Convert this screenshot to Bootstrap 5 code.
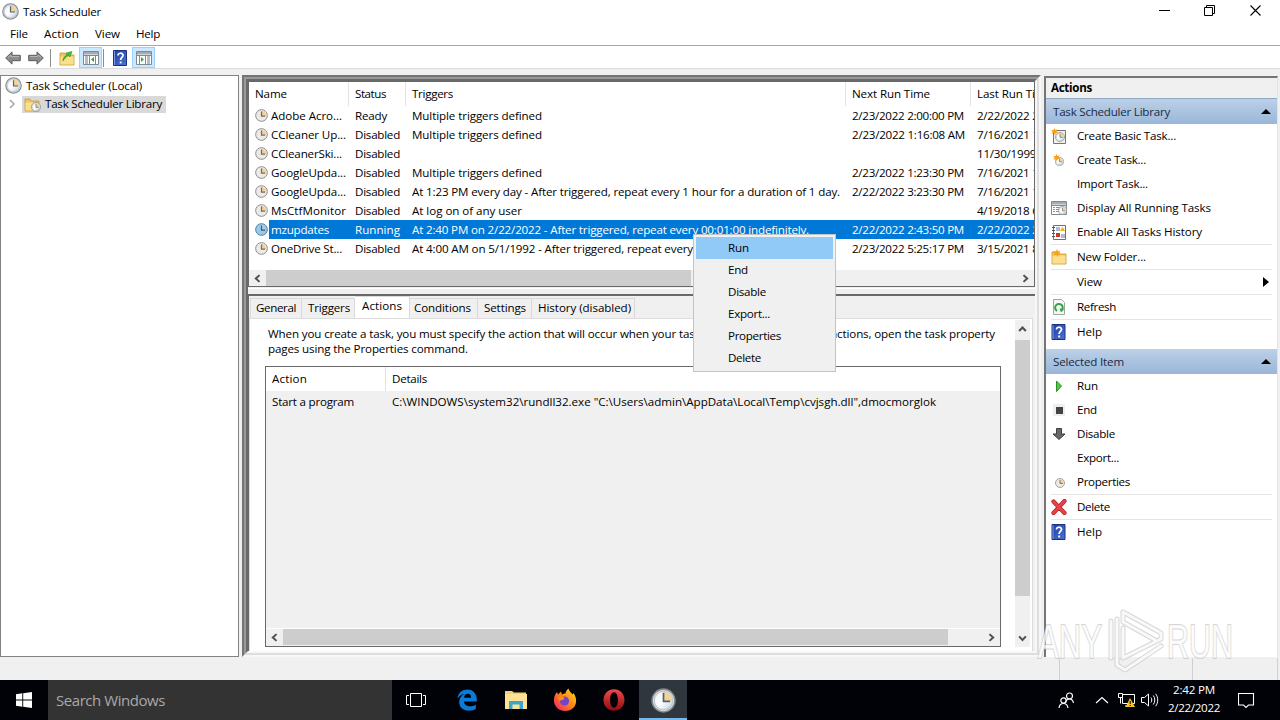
<!DOCTYPE html>
<html lang="en">
<head>
    <meta charset="UTF-8">
    <meta name="viewport" content="width=device-width, initial-scale=1.0">
    <title>Task Scheduler</title>
    <!-- Bootstrap CSS -->
    <link href="https://cdn.jsdelivr.net/npm/bootstrap@5.3.3/dist/css/bootstrap.min.css" rel="stylesheet">
    <style>
        body {
          width: 1280px;
          height: 720px;
          background: #f0f0f0;
          color: #000;
          font-family: "Open Sans", "Noto Sans", sans-serif;
          font-size: 11.6px;
          line-height: 15px;
        }
        svg { display: block; flex: none; }
        span { white-space: pre; }

        /* window chrome */
        .titlebar { height: 24px; padding: 0 2px 1px 2px; gap: 4px; }
        .titlebar .caption { width: 45.5px; height: 20px; }
        .titlebar .caption svg { margin-top: -2px; }
        .menubar { height: 21px; padding-left: 10px; gap: 16px; padding-bottom: 2px; }
        .toolbar { height: 24px; border-top: 1px solid #a8a8a8; border-bottom: 1px solid #dcdcdc; padding: 1px 0 0 5px; }
        .toolbar .divider { width: 1px; height: 18px; background: #8d8d8d; }
        .toolbar .divider.first { margin: 0 8px 0 6px; }
        .toolbar .divider.second { margin: 0 9px 0 1px; }
        .toolbar .pressed { width: 23px; height: 21px; background: #cce8ff; border: 1px solid #99d1ff; }
        .toolbar .pressed.last { margin-left: 5px; }
        .toolbar .forward { margin-left: 7px; }
        .workspace { height: 582px; margin-top: 6px; }

        /* left tree */
        .tree { width: 239px; border: 1px solid #828282; }
        .tree-root { height: 19px; padding-left: 4px; gap: 4px; }
        .tree-root span, .tree-node span { padding-bottom: 1px; }
        .tree-node { height: 18px; padding-left: 8px; }
        .tree-node .picked { background: #d9d9d9; height: 17px; width: 144px; padding-left: 2px; gap: 4px; }

        /* centre */
        .bevel { border: 2px solid; border-color: #747474 #f7f7f7 #f7f7f7 #747474; }
        .bevel-2 { border: 2px solid; border-color: #999 #dedede #dedede #999; }
        .bevel-3 { border: 2px solid; border-color: #696969 #f7f7f7 #f7f7f7 #696969; }
        .centre { width: 799px; margin-left: 3px; }
        .task-list { height: 206px; border: 1px solid #696969; }
        .task-row { display: grid; grid-template-columns: 100px 57px 440px 125px 1fr; height: 19px; }
        .task-row > div { padding-left: 6px; display: flex; align-items: center; overflow: hidden; min-width: 0; }
        .task-row > div:first-child { gap: 3px; }
        .task-head { height: 24px; }
        .task-head > div { border-right: 1px solid #e2e2e2; padding-bottom: 1px; }
        .task-head > div:last-child { border-right: 0; }
        .task-row.chosen { background: linear-gradient(to right, transparent 20px, #0078d7 20px); color: #fff; }
        .splitter { height: 7px; background: linear-gradient(#f0f0f0 0 1px, #fff 1px 2px, #f0f0f0 2px); }
        .detail { border-top: 2px solid #696969; border-left: 1px solid #696969; }
        .scroller { height: 16px; background: #f0f0f0; }
        .scroller .thumb { background: #cdcdcd; height: 16px; }
        .scroller .end { width: 17px; height: 16px; }
        .vscroller { width: 15px; background: #f0f0f0; height: 327px; margin: 1px 2px 0 0; }
        .vscroller .thumb { background: #cdcdcd; height: 256px; }
        .vscroller .end { width: 15px; height: 20px; }

        /* tabs */
        .tab-strip { height: 22px; padding-left: 1px; }
        .tab-item { height: 20px; border: 1px solid #d9d9d9; border-left-width: 0; border-bottom: 0; padding: 0 0 2px 6px; display: flex; align-items: center; }
        .tab-item:first-child { border-left-width: 1px; padding-left: 5px; }
        .tab-item.current { height: 22px; background: #fff; padding: 0 0 4px 7px; }
        .tab-item.after { padding-left: 4px; }
        .tab-page { border: 1px solid #dcdcdc; border-bottom: 0; margin-right: 2px; height: 333px; }
        .page-body { padding-left: 15px; }
        .note { padding: 7px 0 0 3px; height: 47px; }
        .action-box { width: 736px; height: 281px; border: 1px solid #696969; background: #f0f0f0; }
        .action-box .scroller { border-top: 1px solid #fff; height: 18px; padding-bottom: 1px; }
        .action-line { display: grid; grid-template-columns: 120px 1fr; height: 20px; align-items: center; }
        .action-line > div { padding-left: 6px; }
        .action-line.heading { background: #fff; height: 24px; align-items: stretch; }
        .action-line.heading > div { padding-top: 4px; }
        .action-line.heading > div:first-child { border-right: 1px solid #e2e2e2; }

        /* right pane */
        .side { width: 234px; margin-left: 3px; margin-top: 1px; border-left: 2px solid #757575; border-top: 2px solid #757575; border-right: 1px solid #e3e3e3; }
        .side-title { height: 21px; background: #f0f0f0; padding: 0 0 1px 5px; border-bottom: 1px solid #8fa9c2; }
        .side-group { height: 25px; background: linear-gradient(#bcd0e8, #9ab6d8); padding: 0 6px 0 7px; color: #1b2a44; }
        .side-group.second { margin-top: 5px; }
        .side-row { height: 24px; padding-left: 5px; }
        .side-row span { padding-bottom: 2px; }
        .side-row .glyph { width: 26px; height: 16px; }
        .side-line { height: 1px; background: #e4e4e4; margin: 0 5px; }

        .status { height: 23px; padding-top: 1px; }
        .status div { border-right: 1px solid #d0d0d0; }

        /* taskbar */
        .taskbar { height: 40px; background: #000208; color: #fff; }
        .taskbar .start { width: 48px; }
        .taskbar .search { width: 344px; background: #333; color: #a9a9a9; font-size: 15px; padding-left: 8px; }
        .taskbar .app { width: 49px; }
        .taskbar .taskview { width: 48px; margin-right: 2px; }
        .taskbar .app.running { width: 48px; margin-left: 1px; background: #30363d; border-bottom: 2px solid #76b9ed; padding-top: 2px; }
        .tray { width: 222px; }
        .tray .up { margin-left: 20px; }
        .tray .net { margin-left: 9px; }
        .tray .sound { margin-left: 6px; }
        .tray .notes { margin-left: 17px; }
        .clock-text { line-height: 18px; width: 54px; padding-bottom: 2px; margin-left: 8px; }

        /* floating items */
        .popup { left: 693px; top: 234px; width: 143px; height: 138px; background: #f0f0f0; border: 1px solid #c4c4c4; padding: 2px; }
        .popup div { height: 22px; padding: 0 0 1px 32px; display: flex; align-items: center; }
        .popup .hot { background: #91c9f7; }
        .watermark { left: 1034px; top: 606px; }
    </style>
</head>
<body class="overflow-hidden d-flex flex-column">

<!-- Icon shapes -->
<svg width="0" height="0" class="position-absolute">
    <defs>
        <linearGradient id="face" x1="0" y1="0" x2="1" y2="1"><stop offset="0" stop-color="#e9f1f7"/><stop offset=".5" stop-color="#fff"/><stop offset="1" stop-color="#b9cfdf"/></linearGradient>
        <linearGradient id="fox" x1="1" y1="0" x2="0" y2="1"><stop offset="0" stop-color="#ffe226"/><stop offset=".45" stop-color="#ff8a16"/><stop offset="1" stop-color="#f5156c"/></linearGradient>
        <linearGradient id="operaRed" x1="0" y1="0" x2="0" y2="1"><stop offset="0" stop-color="#f04a4a"/><stop offset="1" stop-color="#8e0b10"/></linearGradient>
        <linearGradient id="book" x1="0" y1="0" x2="1" y2="1"><stop offset="0" stop-color="#1e3d9c"/><stop offset="1" stop-color="#4d74d8"/></linearGradient>
        <symbol id="clock" viewBox="0 0 16 16">
            <circle cx="8" cy="8" r="7.3" fill="#d9dcde" stroke="#85898c" stroke-width="1"/>
            <circle cx="8" cy="8" r="5.900" fill="url(#face)" stroke="#b4bcc3" stroke-width=".6"/>
            <path d="M8 8.500V2.400A5.900 5.900 0 0 1 13.700 8.500Z" fill="#f0d39c"/>
            <path d="M8 3V8.500H12.200" fill="none" stroke="#55606b" stroke-width="1.100"/>
        </symbol>
        <symbol id="clock-list" viewBox="0 0 16 16">
            <circle cx="8" cy="8" r="7.2" fill="#eceae6" stroke="#8b8b89" stroke-width="1.200"/>
            <path d="M8 8.500V2.600A5.600 5.600 0 0 1 13.500 8.500Z" fill="#f3cf9a"/>
            <path d="M8 3V8.700H12.500" fill="none" stroke="#7c6a58" stroke-width="1.500"/>
        </symbol>
        <symbol id="clock-picked" viewBox="0 0 16 16">
            <circle cx="8" cy="8" r="7.2" fill="#9cc8ea" stroke="#4c7ea6" stroke-width="1.200"/>
            <path d="M8 8.500V2.600A5.600 5.600 0 0 1 13.500 8.500Z" fill="#b5cbd0"/>
            <path d="M8 3V8.700H12.500" fill="none" stroke="#315e84" stroke-width="1.500"/>
        </symbol>
        <symbol id="help" viewBox="0 0 14 16">
            <path d="M.5.5h13v15H.5z" fill="url(#book)" stroke="#1a3180"/>
            <path d="M1.500 1v14" stroke="#7f9be6"/>
            <path d="M5 5.500C5 2.500 10 2.500 10 5.300C10 7.500 7.600 7.400 7.600 10" fill="none" stroke="#fff" stroke-width="1.700"/>
            <path d="M6.700 11.500h1.900v1.900H6.700z" fill="#fff"/>
        </symbol>
        <symbol id="folder" viewBox="0 0 16 16">
            <path d="M1 3h5l1.500 2H15v10H1z" fill="#f2c55b" stroke="#c9982f" stroke-width=".8"/>
            <path d="M1.500 6.500h13v8h-13z" fill="#fbdf8c"/>
        </symbol>
        <symbol id="arrow" viewBox="0 0 16 14">
            <path d="M.7 7 7 .9V4.300h8.300v5.400H7v3.400z" fill="#8c8c8c" stroke="#5c5c5c" stroke-width="1"/>
            <path d="M3 6.500 6 4v1.500h8" fill="none" stroke="#b4b4b4"/>
        </symbol>
        <symbol id="panel" viewBox="0 0 16 14">
            <path d="M.5.5h15v13H.5z" fill="#fff" stroke="#808890"/>
            <path d="M1 1h14v2.500H1z" fill="#a3abb3"/><path d="M1 4.500h14" stroke="#808890"/>
        </symbol>
        <symbol id="star" viewBox="0 0 8 8">
            <path d="M4 0 5 2.400 7.500 1.500 6.400 4 8 5.500 5.500 5.600 4.500 8 3.200 5.700.6 6.500 1.700 4 0 2.300 2.800 2.500z" fill="#f4a21c"/>
        </symbol>
        <symbol id="chev-left" viewBox="0 0 8 8"><path d="M5.800 1 2.500 4 5.800 7" fill="none" stroke="#505050" stroke-width="1.800"/></symbol>
        <symbol id="chev-right" viewBox="0 0 8 8"><path d="M2.200 1 5.500 4 2.200 7" fill="none" stroke="#505050" stroke-width="1.800"/></symbol>
    </defs>
</svg>

<!-- Title, menu and tool bars -->
<div class="bg-white">
    <div class="titlebar d-flex align-items-center">
        <svg width="17" height="17"><use href="#clock"/></svg>
        <span data-w="78">Task Scheduler</span>
        <div class="d-flex ms-auto">
            <div class="caption d-flex align-items-center justify-content-center"><svg width="11" height="11"><path d="M0 5.500h11" stroke="#000"/></svg></div>
            <div class="caption d-flex align-items-center justify-content-center"><svg width="11" height="11"><path d="M.5 2.500h8v8h-8zM2.500 2.500v-2h8v8h-2" fill="none" stroke="#000"/></svg></div>
            <div class="caption d-flex align-items-center justify-content-center"><svg width="11" height="11"><path d="M.5.5l10 10M10.500.5l-10 10" stroke="#000" stroke-width="1.100"/></svg></div>
        </div>
    </div>
    <div class="menubar d-flex align-items-center">
        <span data-w="18">File</span>
        <span data-w="35">Action</span>
        <span data-w="25">View</span>
        <span data-w="24">Help</span>
    </div>
    <div class="toolbar d-flex align-items-center">
        <svg width="16" height="14"><use href="#arrow"/></svg>
        <svg width="16" height="14" class="forward"><g transform="translate(16 0) scale(-1 1)"><use href="#arrow"/></g></svg>
        <div class="divider first"></div>
        <svg width="16" height="16" class="me-1"><use href="#folder"/><path d="M4 11C4 7 6 6 8 5L7 3l6-1.500-2 5.500-1.500-1.500C7 7 6 8 4 11z" fill="#45bd2e" stroke="#23861a" stroke-width=".5"/></svg>
        <div class="pressed d-flex align-items-center justify-content-center">
            <svg width="16" height="14"><use href="#panel"/><path d="M2 6h3M2 8h3M2 10h3M2 12h3" stroke="#707880"/><path d="M6.500 5v9M12.500 5v9" stroke="#808890"/><path d="M11 6v5L8 8.500z" fill="#35a52a"/></svg>
        </div>
        <div class="divider second"></div>
        <svg width="14" height="16"><use href="#help"/></svg>
        <div class="pressed last d-flex align-items-center justify-content-center">
            <svg width="16" height="14"><use href="#panel"/><path d="M11 6h3M11 8h3M11 10h3M11 12h3" stroke="#707880"/><path d="M3.500 5v9M9.500 5v9" stroke="#808890"/><path d="M5 6v5l3-2.500z" fill="#35a52a"/></svg>
        </div>
    </div>
</div>

<div class="workspace d-flex">
    <!-- Console tree -->
    <div class="tree bg-white">
        <div class="tree-root d-flex align-items-center">
            <svg width="17" height="17"><use href="#clock"/></svg>
            <span data-w="116">Task Scheduler (Local)</span>
        </div>
        <div class="tree-node d-flex align-items-center">
            <svg width="13" height="10"><path d="M1 1l4 4-4 4" fill="none" stroke="#a0a0a0" stroke-width="1.400"/></svg>
            <div class="picked d-flex align-items-center">
                <svg width="17" height="16"><use href="#folder" width="16" height="16"/><svg x="7" y="6" width="10" height="10"><use href="#clock"/></svg></svg>
                <span data-w="117">Task Scheduler Library</span>
            </div>
        </div>
    </div>

    <!-- Centre pane -->
    <div class="centre bevel"><div class="bevel-2 h-100"><div class="bevel-3 h-100">
        <div class="task-list bg-white d-flex flex-column overflow-hidden">
            <div class="task-row task-head">
                <div><span data-w="32">Name</span></div><div><span data-w="31">Status</span></div><div><span data-w="41">Triggers</span></div><div><span data-w="78">Next Run Time</span></div><div><span data-w="75">Last Run Time</span></div>
            </div>
            <div id="tasks"></div>
            <div class="scroller d-flex mt-auto">
                <div class="end d-flex align-items-center justify-content-center"><svg width="9" height="9"><use href="#chev-left"/></svg></div>
                <div class="thumb" style="width:425px"></div>
                <div class="end d-flex align-items-center justify-content-center ms-auto"><svg width="9" height="9"><use href="#chev-right"/></svg></div>
            </div>
        </div>
        <div class="splitter"></div>
        <div class="detail">
            <div class="tab-strip d-flex align-items-end">
                <div class="tab-item" style="width:52px"><span data-w="40">General</span></div>
                <div class="tab-item" style="width:53px"><span data-w="42">Triggers</span></div>
                <div class="tab-item current" style="width:55px"><span data-w="40">Actions</span></div>
                <div class="tab-item after" style="width:68px"><span data-w="57">Conditions</span></div>
                <div class="tab-item" style="width:54px"><span data-w="42">Settings</span></div>
                <div class="tab-item" style="width:103px"><span data-w="93">History (disabled)</span></div>
            </div>
            <div class="tab-page bg-white d-flex">
                <div class="page-body">
                    <div class="note">
                        <div><span data-w="727">When you create a task, you must specify the action that will occur when your task starts.  To change these actions, open the task property</span></div>
                        <div><span data-w="200">pages using the Properties command.</span></div>
                    </div>
                    <div class="action-box d-flex flex-column">
                        <div class="action-line heading"><div><span data-w="35">Action</span></div><div><span data-w="35">Details</span></div></div>
                        <div class="action-line"><div><span data-w="82">Start a program</span></div><div><span data-w="544">C:\WINDOWS\system32\rundll32.exe "C:\Users\admin\AppData\Local\Temp\cvjsgh.dll",dmocmorglok</span></div></div>
                        <div class="scroller d-flex mt-auto">
                            <div class="end d-flex align-items-center justify-content-center"><svg width="9" height="9"><use href="#chev-left"/></svg></div>
                            <div class="thumb" style="width:665px"></div>
                            <div class="end d-flex align-items-center justify-content-center ms-auto"><svg width="9" height="9"><use href="#chev-right"/></svg></div>
                        </div>
                    </div>
                </div>
                <div class="vscroller d-flex flex-column ms-auto">
                    <div class="end d-flex align-items-center justify-content-center"><svg width="9" height="9" viewBox="0 0 8 8"><path d="M1 4.500 4 1.300 7 4.500" fill="none" stroke="#505050" stroke-width="1.800"/></svg></div>
                    <div class="thumb"></div>
                    <div class="end d-flex align-items-center justify-content-center mt-auto"><svg width="9" height="9" viewBox="0 0 8 8"><path d="M1 3 4 6.200 7 3" fill="none" stroke="#505050" stroke-width="1.800"/></svg></div>
                </div>
            </div>
        </div>
    </div></div></div>

    <!-- Actions pane -->
    <div class="side bg-white">
        <div class="side-title d-flex align-items-center fw-bold"><span data-w="41">Actions</span></div>
        <div class="side-group d-flex align-items-center justify-content-between"><span data-w="117">Task Scheduler Library</span><svg width="10" height="5"><path d="M0 5 5 0l5 5z"/></svg></div>
        <div class="side-row d-flex align-items-center"><div class="glyph"><svg width="16" height="16"><path d="M2.500 2.500h12v13h-12z" fill="#f3f1e8" stroke="#7d7567"/><svg x="4" y="4" width="10" height="10"><use href="#clock"/></svg><use href="#star" width="7" height="7"/></svg></div><span data-w="99">Create Basic Task...</span></div>
        <div class="side-row d-flex align-items-center"><div class="glyph"><svg width="16" height="16"><svg x="4" y="5" width="9" height="9"><use href="#clock"/></svg><use href="#star" x="2" y="2" width="7" height="7"/></svg></div><span data-w="69">Create Task...</span></div>
        <div class="side-row d-flex align-items-center"><div class="glyph"></div><span data-w="71">Import Task...</span></div>
        <div class="side-row d-flex align-items-center"><div class="glyph"><svg width="16" height="16"><use href="#panel" y="1" width="16" height="14"/><path d="M2 7.500h2m1 0h4M2 9.500h2m1 0h3M2 11.500h2m1 0h3" stroke="#8a8f94"/><svg x="7" y="6" width="9" height="9"><use href="#clock"/></svg></svg></div><span data-w="134">Display All Running Tasks</span></div>
        <div class="side-row d-flex align-items-center"><div class="glyph"><svg width="16" height="16"><path d="M2.500 1.500h12v14h-12z" fill="#fff" stroke="#67707c"/><path d="M1 3.500h3M1 6.500h3M1 9.500h3M1 12.500h3" stroke="#555"/><path d="M5 4h4M5 6h4M10 11h4M10 13h4" stroke="#5879ae"/><path d="M9 7 11.500 2.500 14 7z" fill="#f0b51c"/><path d="M5 9h4v4H5z" fill="#c63a25"/></svg></div><span data-w="125">Enable All Tasks History</span></div>
        <div class="side-line"></div>
        <div class="side-row d-flex align-items-center"><div class="glyph"><svg width="16" height="16"><use href="#folder"/><use href="#star" x="2" width="8" height="8"/></svg></div><span data-w="69">New Folder...</span></div>
        <div class="side-line"></div>
        <div class="side-row d-flex align-items-center"><div class="glyph"></div><span data-w="25">View</span><svg width="6" height="10" class="ms-auto me-2"><path d="M0 0l6 5-6 5z"/></svg></div>
        <div class="side-line"></div>
        <div class="side-row d-flex align-items-center"><div class="glyph"><svg width="16" height="16"><path d="M2.500.5h8l3 3v12h-11z" fill="#f4f7f4" stroke="#9da79d"/><path d="M6 12A3.800 3.800 0 1 1 10.500 11.500" fill="none" stroke="#35a345" stroke-width="2"/><path d="M8.500 9.500l4.500.5-3 3.500z" fill="#35a345"/></svg></div><span data-w="39">Refresh</span></div>
        <div class="side-line"></div>
        <div class="side-row d-flex align-items-center"><div class="glyph"><svg width="15" height="16"><use href="#help" width="15" height="16"/></svg></div><span data-w="25">Help</span></div>
        <div class="side-group second d-flex align-items-center justify-content-between"><span data-w="71">Selected Item</span><svg width="10" height="5"><path d="M0 5 5 0l5 5z"/></svg></div>
        <div class="side-row d-flex align-items-center"><div class="glyph"><svg width="16" height="16"><path d="M5.500 3 10.500 8l-5 5.500z" fill="#54c443" stroke="#279422"/></svg></div><span data-w="21">Run</span></div>
        <div class="side-row d-flex align-items-center"><div class="glyph"><svg width="16" height="16"><path d="M2 2h12v12H2z" fill="#eee"/><path d="M5 5h7v7H5z" fill="#444"/></svg></div><span data-w="20">End</span></div>
        <div class="side-row d-flex align-items-center"><div class="glyph"><svg width="16" height="16"><path d="M5.500 2.500h5V8H14l-6 5.500L2 8h3.500z" fill="#686868" stroke="#404040"/></svg></div><span data-w="38">Disable</span></div>
        <div class="side-row d-flex align-items-center"><div class="glyph"></div><span data-w="42">Export...</span></div>
        <div class="side-row d-flex align-items-center"><div class="glyph"><svg width="16" height="16"><svg x="4" y="4" width="10" height="10"><use href="#clock-list"/></svg></svg></div><span data-w="53">Properties</span></div>
        <div class="side-line"></div>
        <div class="side-row d-flex align-items-center"><div class="glyph"><svg width="16" height="16"><path d="M2.500 2.500l11 11.500M13.500 2 2.500 14" stroke="#b3222a" stroke-width="4.200" stroke-linecap="round"/><path d="M2.500 2.500l11 11.500M13.500 2 2.500 14" stroke="#e5444a" stroke-width="2.700" stroke-linecap="round"/></svg></div><span data-w="33">Delete</span></div>
        <div class="side-line"></div>
        <div class="side-row d-flex align-items-center"><div class="glyph"><svg width="15" height="16"><use href="#help" width="15" height="16"/></svg></div><span data-w="25">Help</span></div>
    </div>
</div>

<!-- Status bar -->
<div class="status d-flex">
    <div style="width:1060px"></div><div style="width:133px"></div><div style="width:85px"></div>
</div>

<!-- Taskbar -->
<div class="taskbar d-flex">
    <div class="start d-flex align-items-center justify-content-center">
        <svg width="16" height="16"><path d="M0 2.200 6.300 1.300V7.500H0zM7.200 1.200 16 0v7.500H7.200zM0 8.400h6.300v6.300L0 13.800zM7.200 8.400H16V16l-8.800-1.200z" fill="#fff"/></svg>
    </div>
    <div class="search d-flex align-items-center"><span data-w="109">Search Windows</span></div>
    <div class="taskview d-flex align-items-center justify-content-center">
        <svg width="20" height="14"><path d="M4.500.5h11v13h-11zM3 2.500H.5v9H3M17 2.500h2.500v9H17" fill="none" stroke="#fff"/></svg>
    </div>
    <div class="app d-flex align-items-center justify-content-center">
        <svg width="20" height="22"><path d="M.3 9.500C1.300 3.500 5.500.4 10.300.4c6 0 9.500 4.500 9.500 9.900v2.100H7c.2 3.400 3 4.900 6 4.900 2.200 0 4-.6 5.800-1.600v4.400c-2 1.100-4.200 1.600-6.900 1.600-5.900 0-9.700-3.500-9.700-8.700 0-3.600 1.800-6.300 5-8.100C4.400 5.500 2.200 7 .3 9.500zM7.100 8.700h7c0-2.700-1.200-4-3.400-4-2.100 0-3.400 1.600-3.600 4z" fill="#0a7cd8"/></svg>
    </div>
    <div class="app d-flex align-items-center justify-content-center">
        <svg width="22" height="20"><path d="M0 1h7l2 1.500h12V19H0z" fill="#f5cf72"/><path d="M0 4h22v15H0z" fill="#fde294"/><path d="M4 11h14v8h-3.500v-4.500h-7V19H4z" fill="#3aa6cf"/></svg>
    </div>
    <div class="app d-flex align-items-center justify-content-center">
        <svg width="24" height="24"><path d="M1 13C.7 9 2.200 6 4 4l1 2.500L8 3.500l1 3c1-.7 2-1 3.500-1C12.500 3.500 14 1.500 15.500.5c.5 3 2.500 3.500 4 6l1-1.500c2 3 3 6 2.500 9.500-.7 5-5.500 8.500-11 8.500S1.200 19 1 13z" fill="url(#fox)"/><circle cx="11.500" cy="13" r="4.600" fill="#7243cb"/><path d="M5 9.500c2-2 4.500-1.500 6.500.5-1 2.500-3 1.500-4.500 3-1.500-.5-2-2-2-3.500z" fill="#ff8b19"/></svg>
    </div>
    <div class="app d-flex align-items-center justify-content-center">
        <svg width="22" height="22"><path fill-rule="evenodd" d="M11 .3c6 0 10.500 4.600 10.500 10.700S17 21.700 11 21.700.5 17.100.5 11 5 .3 11 .3zm0 3c-2.500 0-3.900 3.400-3.900 7.700s1.400 7.700 3.900 7.700 3.900-3.400 3.900-7.700-1.400-7.700-3.900-7.700z" fill="url(#operaRed)"/></svg>
    </div>
    <div class="app running d-flex align-items-center justify-content-center">
        <svg width="25" height="25"><use href="#clock"/></svg>
    </div>
    <div class="tray ms-auto d-flex align-items-center">
        <svg width="17" height="17"><g fill="none" stroke="#fff" stroke-width="1.200"><circle cx="11.500" cy="4" r="3"/><path d="M7.500 10.500C8 8 9.500 7 11.500 7S15 8.500 15.500 11"/><circle cx="5.500" cy="8.500" r="2.700"/><path d="M1 16c.3-3 2-4.500 4.500-4.500S9.500 13 10 16"/></g></svg>
        <svg width="14" height="8" class="up"><path d="M1 7l6-5.500L13 7" fill="none" stroke="#fff" stroke-width="1.200"/></svg>
        <svg width="17" height="16" class="net"><path d="M4.500 2.500h12v9h-12zM7 14h5M10 11.500v2.500" fill="none" stroke="#fff"/><path d="M.5 1.500h4v4h-4zM2.500 5.500v6" fill="#000" stroke="#fff"/><path d="M12 6l5 9H7.500z" fill="#f7c52b"/><path d="M12.200 9v3m0 1v1" stroke="#000"/></svg>
        <svg width="18" height="16" class="sound"><path d="M.5 5.500h3l4-3.500v12l-4-3.500h-3zM10 5.500c1 1.500 1 3.500 0 5M12.300 3.500c2 2.500 2 6.500 0 9M14.600 1.800c2.800 3.500 2.800 9 0 12.400" fill="none" stroke="#fff"/></svg>
        <div class="clock-text text-center"><div><span data-w="42">2:42 PM</span></div><div><span data-w="52">2/22/2022</span></div></div>
        <svg width="17" height="17" class="notes"><path d="M.5 1.500h15v11.500h-5L8 15.500 5.500 13h-5z" fill="none" stroke="#fff" stroke-width="1.100"/></svg>
    </div>
</div>

<!-- Context menu -->
<div class="popup position-absolute">
    <div class="hot"><span data-w="21">Run</span></div>
    <div><span data-w="20">End</span></div>
    <div><span data-w="38">Disable</span></div>
    <div><span data-w="42">Export...</span></div>
    <div><span data-w="53">Properties</span></div>
    <div><span data-w="33">Delete</span></div>
</div>

<!-- Watermark -->
<svg class="watermark position-absolute" width="206" height="70">
    <g fill="#fff" fill-opacity=".75" stroke="#bcbcbc" stroke-opacity=".6" stroke-width="2" paint-order="stroke" font-family="Liberation Sans, sans-serif" font-size="48">
        <text x="4" y="52" textLength="64" lengthAdjust="spacingAndGlyphs">ANY</text>
        <text x="133" y="52" textLength="66" lengthAdjust="spacingAndGlyphs">RUN</text>
    </g>
    <g fill="none" stroke-linejoin="round" stroke-linecap="round">
        <path d="M77 52V15M83 13v46l8 5 36-24M89 22v30M89 6l38 21v6L89 52M89 6v10l32 18" stroke="#bcbcbc" stroke-opacity=".6" stroke-width="5"/>
        <path d="M77 52V15M83 13v46l8 5 36-24M89 22v30M89 6l38 21v6L89 52M89 6v10l32 18" stroke="#fff" stroke-opacity=".85" stroke-width="3"/>
    </g>
</svg>

<!-- Bootstrap JS Bundle -->
<script src="https://cdn.jsdelivr.net/npm/bootstrap@5.3.3/dist/js/bootstrap.bundle.min.js"></script>

<script>
    // Each cell is [text, width]
    const tasks = [
        [['Adobe Acro...', 71], ['Ready', 32], ['Multiple triggers defined', 130], ['2/23/2022 2:00:00 PM', 112], ['2/22/2022 2:00:01 PM', 112]],
        [['CCleaner Up...', 75], ['Disabled', 45], ['Multiple triggers defined', 130], ['2/23/2022 1:16:08 AM', 113], ['7/16/2021 1:16:09 AM', 113]],
        [['CCleanerSki...', 71], ['Disabled', 45], ['', 0], ['', 0], ['11/30/1999 12:00:00 AM', 126]],
        [['GoogleUpda...', 75], ['Disabled', 45], ['Multiple triggers defined', 130], ['2/23/2022 1:23:30 PM', 112], ['7/16/2021 1:23:31 PM', 112]],
        [['GoogleUpda...', 75], ['Disabled', 45], ['At 1:23 PM every day - After triggered, repeat every 1 hour for a duration of 1 day.', 428], ['2/22/2022 3:23:30 PM', 112], ['7/16/2021 1:23:31 PM', 112]],
        [['MsCtfMonitor', 75], ['Disabled', 45], ['At log on of any user', 110], ['', 0], ['4/19/2018 6:12:10 PM', 112]],
        [['mzupdates', 58], ['Running', 45], ['At 2:40 PM on 2/22/2022 - After triggered, repeat every 00:01:00 indefinitely.', 397], ['2/22/2022 2:43:50 PM', 112], ['2/22/2022 2:42:50 PM', 112]],
        [['OneDrive St...', 71], ['Disabled', 45], ['At 4:00 AM on 5/1/1992 - After triggered, repeat every', 281], ['2/23/2022 5:25:17 PM', 112], ['3/15/2021 8:25:17 PM', 112]]
    ];
    const chosen = 6;

    document.getElementById('tasks').innerHTML = tasks.map((task, index) => {
        const face = index === chosen ? 'clock-picked' : 'clock-list';
        const cells = task.map((cell, col) => {
            const icon = col === 0 ? `<svg width="13" height="13"><use href="#${face}"/></svg>` : '';
            return `<div>${icon}<span data-w="${cell[1]}">${cell[0]}</span></div>`;
        });
        return `<div class="task-row ${index === chosen ? 'chosen' : ''}">${cells.join('')}</div>`;
    }).join('');

    document.querySelectorAll('[data-w]').forEach(label => {
        const count = label.textContent.length;
        if (!count) return;
        const natural = label.getBoundingClientRect().width;
        label.style.letterSpacing = (label.dataset.w - natural) / count + 'px';
    });
</script>
</body>
</html>
